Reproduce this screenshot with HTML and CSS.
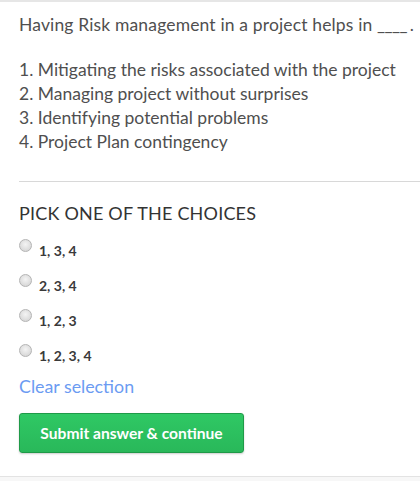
FILE: index.html
```html
<!DOCTYPE html>
<html>
<head>
<meta charset="utf-8">
<link rel="stylesheet" href="styles.css">
</head>
<body>
<div class="page">
  <div class="question">
    <p class="prompt">Having Risk management in a project helps in <span class="blank">____</span>.</p>
    <ol class="items">
      <li>1. Mitigating the risks associated with the project</li>
      <li>2. Managing project without surprises</li>
      <li>3. Identifying potential problems</li>
      <li>4. Project Plan contingency</li>
    </ol>
  </div>
  <div class="answers">
    <h2 class="pick">PICK ONE OF THE CHOICES</h2>
    <div class="choices">
      <label class="choice"><span class="radio"></span><span class="label">1, 3, 4</span></label>
      <label class="choice"><span class="radio"></span><span class="label">2, 3, 4</span></label>
      <label class="choice"><span class="radio"></span><span class="label">1, 2, 3</span></label>
      <label class="choice"><span class="radio"></span><span class="label">1, 2, 3, 4</span></label>
    </div>
    <a class="clear">Clear selection</a>
    <button class="submit">Submit answer &amp; continue</button>
  </div>
  <div class="footer"></div>
</div>
</body>
</html>
```
FILE: styles.css
```css
html, body {
  margin: 0;
  padding: 0;
  background: #fff;
}
body {
  font-family: Lato, "Open Sans", sans-serif;
  color: #4f4f4f;
  width: 420px;
  height: 482px;
  overflow: hidden;
}
.page {
  border-top: 2px solid #e6e6e6;
  display: flex;
  flex-direction: column;
}
.question {
  padding: 11px 0 0 19px;
}
.prompt {
  margin: 0;
  font-size: 17.5px;
  line-height: 24px;
  white-space: nowrap;
  letter-spacing: 0.15px;
}
.blank {
  letter-spacing: -0.6px;
  margin-right: 3px;
}
.items {
  list-style: none;
  margin: 21px 0 0;
  padding: 0;
  font-size: 17.5px;
  line-height: 24px;
}
.answers {
  margin: 27px 0 0 19px;
  border-top: 1px solid #d8d8d8;
  padding-top: 19px;
}
.pick {
  margin: 0;
  font-size: 18px;
  font-weight: 400;
  line-height: 24px;
  color: #333;
  letter-spacing: 0.2px;
}
.choices {
  display: flex;
  flex-direction: column;
  gap: 13px;
  margin-top: 12px;
}
.choice {
  display: flex;
  align-items: center;
  gap: 7px;
  height: 22px;
}
.radio {
  width: 11px;
  height: 11px;
  border-radius: 50%;
  border: 1px solid #b4b4b4;
  background: radial-gradient(circle at 50% 40%, #f4f4f4 0%, #dedede 60%, #cfcfcf 100%);
  margin-top: -6px;
}
.label {
  font-size: 14px;
  font-weight: 700;
  color: #3a3a3a;
  margin-top: 4px;
}
.clear {
  display: block;
  margin-top: 11px;
  font-size: 17.8px;
  line-height: 22px;
  color: #6b9bf2;
}
.submit {
  display: block;
  margin-top: 16px;
  width: 225px;
  height: 40px;
  border: 1px solid #1f9a48;
  border-radius: 3px;
  background: linear-gradient(#2fc864, #29b85a);
  color: #fff;
  font-family: Lato, sans-serif;
  font-weight: 700;
  font-size: 15.6px;
  padding: 0;
  box-shadow: 0 1px 2px rgba(0,0,0,0.2);
}
.footer {
  margin-top: 23px;
  border-top: 1px solid #e3e3e3;
  background: #f7f7f7;
  height: 4px;
}
```
